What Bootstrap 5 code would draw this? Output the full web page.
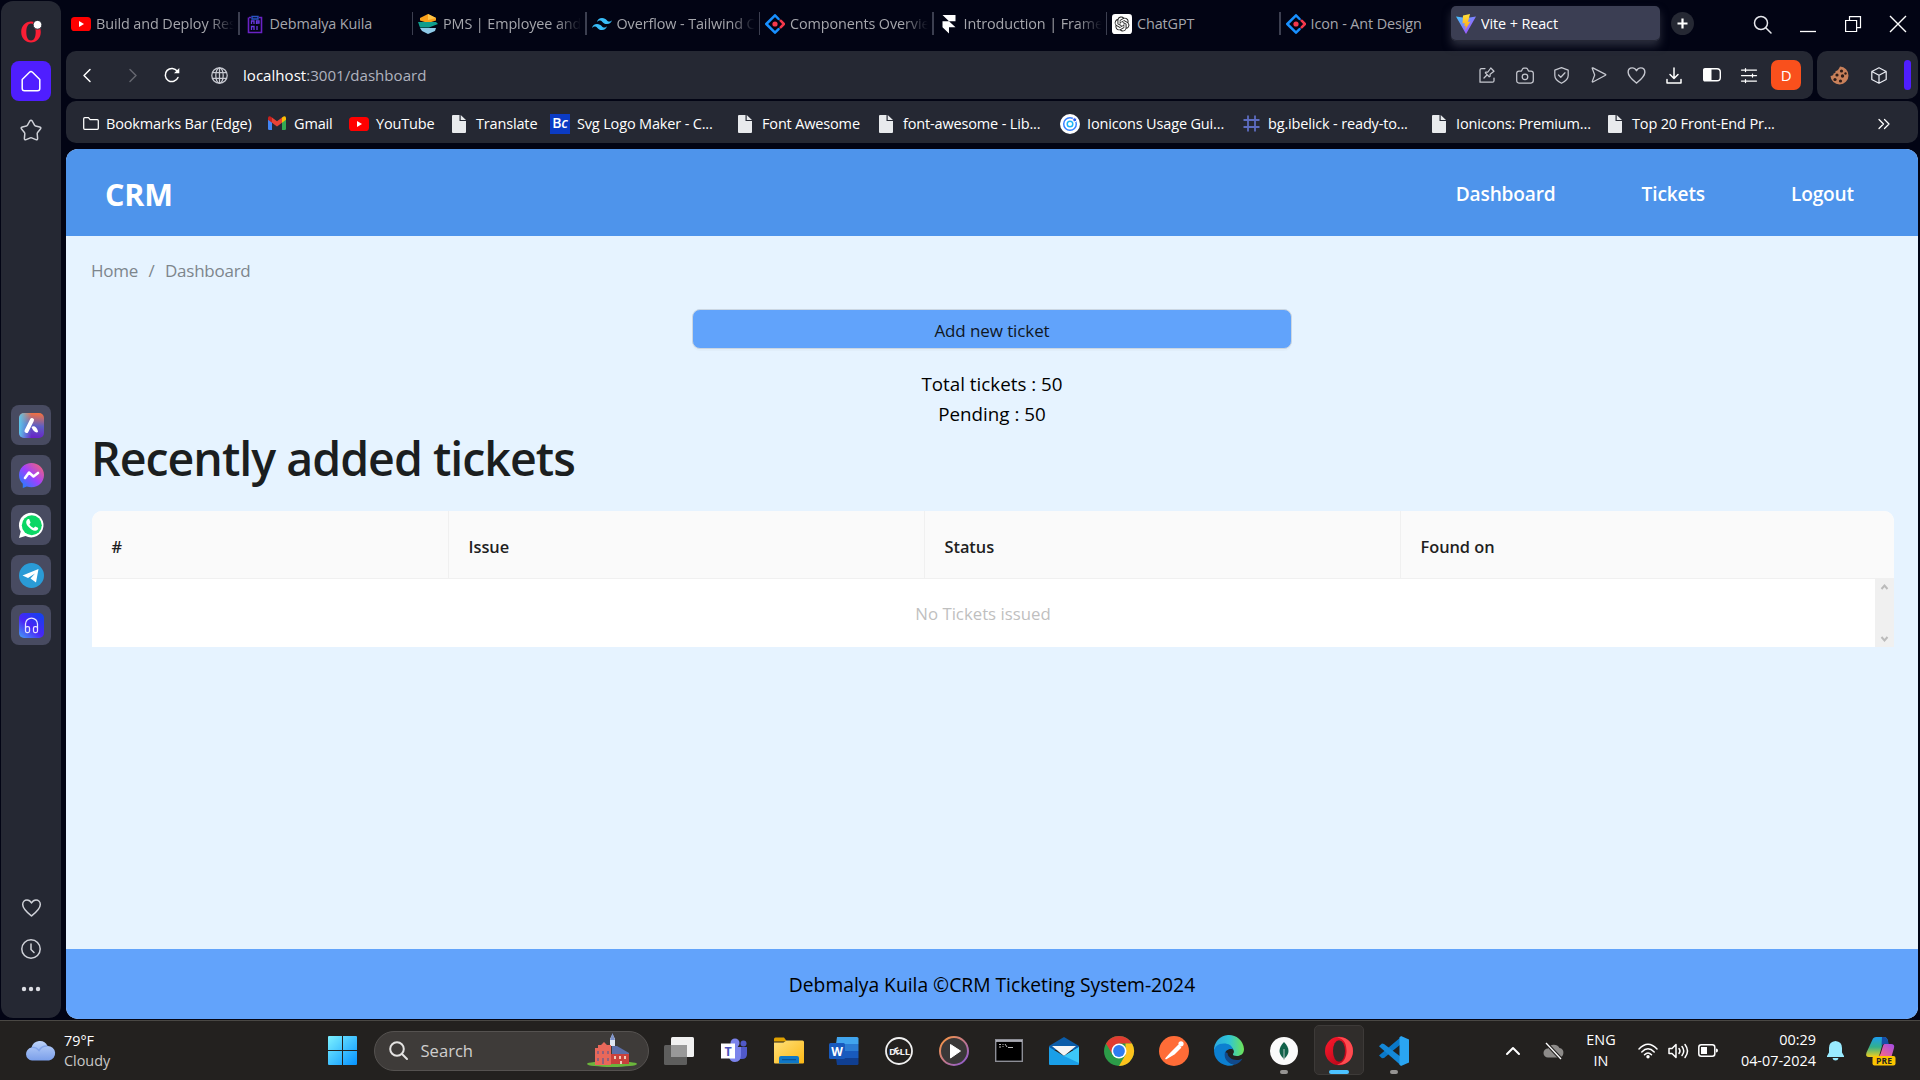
<!DOCTYPE html>
<html lang="en" data-bs-theme="light">
<head>
<meta charset="utf-8">
<title>Vite + React</title>
<link href="https://cdn.jsdelivr.net/npm/bootstrap@5.3.0/dist/css/bootstrap.min.css" rel="stylesheet">
<style>
  :root { --panel:#252833; --chrome:#020414; --ink:#e9ebf2; }
  body { width:1920px; height:1080px; overflow:hidden; background:var(--chrome); font-family:"Open Sans","Noto Sans",sans-serif; font-size:14px; line-height:1.2; }
  svg { display:block; flex:none; overflow:visible; }
  .ln { fill:none; stroke:currentColor; stroke-width:1.5; stroke-linecap:round; stroke-linejoin:round; }
  .thin { stroke-width:1.25; }
  .fat { stroke-width:2; }
  .desk { height:1020px; }
  .side { width:60px; height:1017px; margin:1px 5px 0 1px; background:var(--panel); border-radius:12px; color:#cfd1d8; }
  .side .slot { width:40px; height:40px; border-radius:8px; }
  .side > * { flex:none; }
  .logo { margin-top:18px; }
  .home { background:#4f1eff; margin-top:18px; color:#fff; }
  .star { margin-top:18px; }
  .side .apps { margin-top:264px; gap:10px; }
  .side .apps .slot { background:#484b61; }
  .clock { margin:21px 0 27px; }
  .dots { margin-bottom:26px; }
  .view { width:1852px; }

  .tabs { height:51px; color:#a5a6ac; font-size:14.4px; }
  .tb { width:173.5px; height:48px; padding-left:5px; position:relative; }
  .tb:not(:nth-child(8)):not(.on)::after { content:""; position:absolute; right:0; top:12px; width:1.5px; height:23px; background:#3c3f50; }
  .tb .lbl { margin-left:5px; width:138px; white-space:nowrap; overflow:hidden; letter-spacing:-.1px; }
  .tb .fade-end { -webkit-mask-image:linear-gradient(90deg,#000 82%,transparent 100%); mask-image:linear-gradient(90deg,#000 82%,transparent 100%); }
  .tb.on { width:209px; height:35px; margin:6px 0 0 -3px; background:#3b3e53; border-radius:5px; color:#fff; box-shadow:0 5px 8px #2a2d3c, inset 0 -1px #252735; }
  .plus { width:23px; height:23px; margin:12px 0 0 11px; background:#252833; border-radius:50%; color:#fff; }
  .wins { margin-right:-2px; }
  .wc { width:45px; height:48px; color:#e6e7ec; }

  .addr { height:48px; gap:4px; color:#c6c8d0; }
  .addr .bar { width:1747px; background:var(--panel); border-radius:10px; padding-right:8px; }
  .addr .ext { width:101px; background:var(--panel); border-radius:10px; }
  .cell { width:37.4px; }
  .c-back { width:42px; color:#fff; } .c-fwd { width:50px; color:#64666f; } .c-load { width:28px; color:#fff; } .c-globe { width:48px; margin-left:9px; }
  .url { font-size:15.1px; color:#b0b3bf; }
  .url b { font-weight:400; color:#fff; }
  .userbox { width:30px; height:30px; background:#f9501c; border-radius:7px; color:#fff; font-size:15px; }
  .cookie { margin-left:13px; } .cube { margin-left:22px; color:#e9ebf2; }
  .strip { width:7px; height:30px; background:#4f1eff; margin-left:17px; }

  .marks { height:42px; margin-top:2px; background:var(--panel); border-radius:10px; padding:3px 0 0 15px; color:#fff; font-size:14.5px; letter-spacing:-.16px; white-space:nowrap; }
  .marks .bm { gap:7px; }
  .marks .bm:first-child { gap:5px; }
  .marks .ib { width:20px; }
  .bm:nth-child(1){width:186px} .bm:nth-child(2){width:82px} .bm:nth-child(3){width:100px} .bm:nth-child(4){width:101px}
  .bm:nth-child(5){width:185px} .bm:nth-child(6){width:141px} .bm:nth-child(7){width:184px} .bm:nth-child(8){width:181px}
  .bm:nth-child(9){width:188px} .bm:nth-child(10){width:176px}
  .marks .bc { background:#0b3bc4; height:20px; font-size:14px; font-weight:600; }
  .more { margin-right:28px; }

  .site { margin-top:6px; height:870px; border-radius:12px; overflow:hidden; background:#e6f3ff; color:#000; }
  .top { height:87px; background:#4e94eb; color:#fff; padding:3px 64px 0 39px; }
  .brand { font-size:30.5px; font-weight:700; letter-spacing:-.2px; }
  .top .menu { gap:86px; }
  .top .lk { color:#fff; font-size:19.1px; font-weight:600; letter-spacing:-.15px; padding:0; }
  .crumbs { font-size:17px; letter-spacing:-.25px; color:#7d858c; padding:25px 0 0 25px; --bs-breadcrumb-divider-color:#7d858c; --bs-breadcrumb-item-padding-x:10.5px; margin:0; }
  .crumbs .breadcrumb-item.active { color:#7d858c; }
  .add { width:600px; height:40px; margin:28px auto 0; background:#61a3fb; border:1px solid #cbd6e2; border-radius:8px; box-shadow:0 2px 0 rgba(0,0,0,.02); font-size:17px; padding:2px 0 0; color:#10171f; letter-spacing:-.1px; }
  .stats { font-size:18.8px; line-height:30px; margin-top:20px; }
  .recent { font-size:46.5px; font-weight:600; letter-spacing:-1px; color:#1b1e20; line-height:58px; margin:0 0 0 25px; }
  .tix { width:1802px; margin:24px 0 0 25.5px; border-radius:10px 10px 0 0; overflow:hidden; background:#fff; }
  .tix .hd { height:68px; background:#fafafa; border-bottom:1px solid #f0f0f0; font-size:16.4px; letter-spacing:-.05px; font-weight:600; color:#1f1f1f; }
  .hd div { padding:3px 0 0 20px; border-right:1px solid #f0f0f0; height:100%; display:flex; align-items:center; }
  .hd div:nth-child(1){width:357px} .hd div:nth-child(2),.hd div:nth-child(3){width:476px} .hd div:nth-child(4){border:0}
  .none { height:68px; padding-top:2px; font-size:16.8px; color:#bfbfbf; }
  .scr { width:19px; background:#f0f0f0; padding:5px 0; }
  .foot { height:70px; background:#62a3fb; font-size:19.25px; margin-top:auto; padding-top:2px; }

  .task { height:60px; background:#23211f; border-top:1px solid #4a4844; color:#fff; font-size:14.4px; }
  .wx { width:328px; padding-left:25px; }
  .wx .tx { margin-left:8px; line-height:20px; }
  .wx .tx span { color:#c9c8c7; }
  .find { width:275px; height:40px; margin-left:16.5px; background:#3e3b39; border:1px solid #555250; border-radius:20px; font-size:16.6px; color:#d0cfce; padding:0 11px 0 14px; }
  .find span { margin-left:13px; }
  .dock { margin-left:3px; }
  .ai { width:55px; height:59px; position:relative; }
  .ai.cur::before { content:""; position:absolute; inset:4px 2.5px 5px; background:#302d2b; border:1px solid #3d3a38; border-radius:5px; }
  .ai svg { position:relative; }
  .ai.run::after { content:""; position:absolute; left:23.5px; top:49px; width:8px; height:4px; border-radius:2px; background:#969492; }
  .ai.cur::after { left:17.5px; width:20px; background:#4cc2ff; }
  .tray { margin-left:auto; line-height:20.5px; }
  .t-cloud { margin-left:23px; } .t-lang { width:40px; margin:0 17px; } .t-sys { gap:10px; } .t-time { width:98px; } .t-bell { margin-left:11px; } .t-pilot { margin:0 24px 0 22px; }
</style>
</head>
<body>
<svg width="0" height="0" class="position-absolute">
  <defs>
    <linearGradient id="gv" x1="0" y1="0" x2="1" y2="1"><stop offset="0" stop-color="#41c8ff"/><stop offset="1" stop-color="#bd34fe"/></linearGradient>
    <linearGradient id="gy" x1="0" y1="0" x2="0" y2="1"><stop offset="0" stop-color="#ffe03a"/><stop offset="1" stop-color="#ffa014"/></linearGradient>
    <linearGradient id="gop" x1="0" y1="0" x2="1" y2="1"><stop offset="0" stop-color="#ff1b2d"/><stop offset="1" stop-color="#a70014"/></linearGradient>
    <linearGradient id="gm" x1="0" y1="1" x2="1" y2="0"><stop offset="0" stop-color="#0a8cff"/><stop offset=".5" stop-color="#a040ff"/><stop offset="1" stop-color="#ff6a62"/></linearGradient>
    <linearGradient id="gw" x1="0" y1="0" x2="1" y2="1"><stop offset="0" stop-color="#7df2ff"/><stop offset="1" stop-color="#0592ff"/></linearGradient>
    <linearGradient id="ga" x1=".6" y1="0" x2=".5" y2="1"><stop offset="0" stop-color="#f27042"/><stop offset=".5" stop-color="#5d5fc4"/><stop offset="1" stop-color="#6a21c7"/></linearGradient>
    <linearGradient id="ga2" x1="0" x2="1"><stop offset="0" stop-color="#5cc6ea"/><stop offset=".5" stop-color="#5cc6ea" stop-opacity="0"/></linearGradient>
    <linearGradient id="gh" x1="0" y1="1" x2=".8" y2="0"><stop offset="0" stop-color="#46a0f5"/><stop offset=".5" stop-color="#4a25f5"/><stop offset="1" stop-color="#1640ee"/></linearGradient>
    <linearGradient id="gc" x1="0" y1="0" x2="0" y2="1"><stop offset="0" stop-color="#bcd3fa"/><stop offset="1" stop-color="#7b9fea"/></linearGradient>
    <linearGradient id="ge" x1="0" x2="1"><stop offset="0" stop-color="#2ba8e0"/><stop offset=".5" stop-color="#2fc5d6"/><stop offset="1" stop-color="#6fe455"/></linearGradient>
    <linearGradient id="gf" x1="0" y1="0" x2="1" y2="1"><stop offset="0" stop-color="#ffe07a"/><stop offset="1" stop-color="#fdb814"/></linearGradient>
    <linearGradient id="gp" x1="0" y1="0" x2="1" y2="1"><stop offset="0" stop-color="#ff9a3c"/><stop offset="1" stop-color="#8757d8"/></linearGradient>
    <linearGradient id="gl" x1="0" y1="0" x2="0" y2="1"><stop offset="0" stop-color="#1c9cf0"/><stop offset=".5" stop-color="#32b08c"/><stop offset="1" stop-color="#f2cf1c"/></linearGradient>
    <linearGradient id="gr" x1="0" y1="1" x2="1" y2="0"><stop offset="0" stop-color="#ff6a80"/><stop offset="1" stop-color="#a14be8"/></linearGradient>
    <symbol id="yt" viewBox="0 0 20 20"><rect y="3" width="20" height="14" rx="3.600" fill="#f00"/><path d="M8 7v6l5-3z" fill="#fff"/></symbol>
    <symbol id="file" viewBox="0 0 14 18"><path d="M0 1a1 1 0 0 1 1-1h6.500v6H14v11a1 1 0 0 1-1 1H1a1 1 0 0 1-1-1zM8.700 0 14 5H8.700z" fill="#e8eaed"/></symbol>
    <symbol id="ant" viewBox="0.800 0.800 18.400 18.400"><path d="M13.300 5.400 10 2 2 10l8 8 3.300-3.300" fill="none" stroke="#1890ff" stroke-width="2.300" stroke-linecap="round" stroke-linejoin="round"/><path d="m15.200 7 3 3-3 3" fill="none" stroke="#f5384b" stroke-width="2.300" stroke-linecap="round" stroke-linejoin="round"/><circle cx="10" cy="10" r="2.400" fill="#f5384b"/></symbol>
    <symbol id="heart" viewBox="0 0 20 20"><path class="ln" d="M10 18C6 14.800 1.200 11 1.200 6.500 1.200 3.800 3.100 2 5.500 2 7.600 2 9 3.200 10 5c1-1.800 2.400-3 4.500-3 2.400 0 4.300 1.800 4.300 4.500C18.800 11 14 14.800 10 18z"/></symbol>
    <symbol id="opera" viewBox="0 0 30 30"><ellipse cx="15" cy="15" rx="14" ry="14.300" fill="url(#gop)"/><path d="M13 1.500c8 1 9.500 8 9.500 13.500S20 27.500 13 28.500C22 30 29 24 29 15S22 0 13 1.500z" fill="#ff4b50"/><ellipse cx="15" cy="15" rx="6" ry="10.800" fill="#302d2b"/></symbol>
  </defs>
</svg>

<div class="desk d-flex">
  <!-- browser sidebar -->
  <aside class="side d-flex flex-column align-items-center">
    <svg class="logo" width="22" height="24" viewBox="0 0 22 24"><path fill-rule="evenodd" fill="#fa1e35" d="M11 2.500c5.500 0 9.800 4.400 9.800 10.500S16.500 23.500 11 23.500 1.200 19.100 1.200 13 5.500 2.500 11 2.500zM11 4.500C8 4.500 6.300 8 6.300 13S8 21.500 11 21.500s4.700-3.500 4.700-8.500S14 4.500 11 4.500z"/><circle cx="17.500" cy="5.800" r="4.400" fill="#fff" stroke="#252833"/></svg>
    <div class="slot home d-flex align-items-center justify-content-center">
      <svg width="20" height="22" viewBox="0 0 20 22"><path class="ln" d="M1.200 9.500 8.500 2.200q1.500-1.400 3 0l7.300 7.300v9q0 2.300-2.300 2.300h-13q-2.300 0-2.300-2.300z"/></svg>
    </div>
    <svg class="star" width="22" height="22" viewBox="0 0 22 22"><path class="ln" d="M9.800 2.700q1.200-2 2.400 0L14.600 7l4.900 1.100q2 .5.600 2.100l-3.200 3.700.5 4.800q.1 2.200-1.900 1.400H6.500q-2 .8-1.900-1.400l.5-4.800-3.200-3.700Q.500 8.600 2.500 8.100L7.400 7z" visibility="hidden"/><path class="ln" d="M9.800 2q1.200-1.700 2.400 0l2.300 4.200q.4.700 1.100.9l4.100.9q1.900.6.700 2.100l-2.800 3.300q-.5.600-.4 1.300l.4 4.700q0 1.800-1.700 1.200l-4.200-1.700q-.7-.3-1.400 0l-4.200 1.700q-1.700.6-1.700-1.200l.4-4.700q.1-.7-.4-1.300L1.600 10.100Q.4 8.600 2.300 8l4.100-.9q.7-.2 1.100-.9z"/></svg>
    <div class="apps d-flex flex-column">
      <div class="slot d-flex align-items-center justify-content-center"><svg width="25" height="25"><rect width="25" height="25" rx="5" fill="url(#ga)"/><rect width="25" height="25" rx="5" fill="url(#ga2)"/><path d="M7.500 18 13 7" stroke="#fff" stroke-width="4" stroke-linecap="round"/><path d="M12.500 14c3-2 6 1 6.500 5-2 1.500-5-1-6.500-5z" fill="#fff"/></svg></div>
      <div class="slot d-flex align-items-center justify-content-center"><svg width="25" height="25"><path d="M12.500 0C5.500 0 0 5 0 12c0 3.700 1.400 6.600 3.800 8.800V25l4-1.500c1.500.4 3 .7 4.700.7 7 0 12.500-5.200 12.500-12.200S19.500 0 12.500 0z" fill="url(#gm)"/><path d="m6 15 4-5.500 4.500 4 4.500-3.500" fill="none" stroke="#fff" stroke-width="2.600" stroke-linecap="round" stroke-linejoin="round"/></svg></div>
      <div class="slot d-flex align-items-center justify-content-center"><svg width="25" height="25"><path d="m0 25 1.700-6.500A12.300 12.300 0 1 1 6.500 23z" fill="#fff"/><circle cx="12.800" cy="12.200" r="10" fill="#0bd765"/><path d="M8.700 6.200c-2.500 2-1.600 5 1 7.900 3 3.300 6.800 5 8.900 2.600.9-1 .5-1.900.3-2l-2.600-1.300-1.700 1.700c-2-.8-3.300-2-4.200-3.800l1.200-1.600L10.300 6.300c-.5-.4-1-.3-1.600-.1z" fill="#fff"/></svg></div>
      <div class="slot d-flex align-items-center justify-content-center"><svg width="25" height="25"><circle cx="12.500" cy="12.500" r="12.500" fill="#2a9bd6"/><path d="M3.500 12.500 19.500 6 17 19.500l-5.500-4 4.500-5-7 4.500z" fill="#fff"/></svg></div>
      <div class="slot d-flex align-items-center justify-content-center"><svg width="25" height="25" color="#e8e6ff"><rect width="25" height="25" rx="5" fill="url(#gh)"/><g class="ln thin"><path d="M6.500 15v-4a6 6 0 0 1 12 0v4"/><rect x="6.500" y="13.500" width="4" height="6" rx="1.500"/><rect x="14.500" y="13.500" width="4" height="6" rx="1.500"/></g></svg></div>
    </div>
    <div class="d-flex flex-column align-items-center mt-auto">
      <svg width="21" height="20"><use href="#heart"/></svg>
      <svg class="clock" width="20" height="20" viewBox="0 0 20 20"><circle class="ln" cx="10" cy="10" r="9.200"/><path class="ln" d="M10 5v5.500l3 3"/></svg>
      <svg class="dots" width="20" height="6" fill="#dcdde3"><circle cx="3" cy="3" r="2.200"/><circle cx="10" cy="3" r="2.200"/><circle cx="17" cy="3" r="2.200"/></svg>
    </div>
  </aside>

  <div class="view d-flex flex-column">
    <!-- tab strip -->
    <div class="tabs d-flex">
      <div class="tb d-flex align-items-center"><svg width="20" height="20"><use href="#yt"/></svg><span class="lbl fade-end">Build and Deploy Res</span></div>
      <div class="tb d-flex align-items-center"><svg width="20" height="20" viewBox="0 0 20 20"><path d="M4 3.500h2M14 3.500h2.500v15h-13v-15" fill="none" stroke="#6a22c4" stroke-width="1.600"/><path d="M7 2.500h6V5H7z" fill="none" stroke="#2b55c4" stroke-width="1.400"/><path d="M6.500 10V7H9v3M11.500 10V7H14v2h-2.500M6.500 16v-3.500H9V16M12 12v4" fill="none" stroke="#6a38e0" stroke-width="1.300"/></svg><span class="lbl">Debmalya Kuila</span></div>
      <div class="tb d-flex align-items-center"><svg width="20" height="20" viewBox="0 0 20 20"><path d="M10 0 18 4v2.500L10 9 2 6.500V4z" fill="#f9a01b"/><path d="m10 0 8 4-8 2z" fill="#ffc547"/><path d="M0 8h18l2 2-9 3.500H2z" fill="#0f9d8c"/><path d="M2 14h16l-1 3-7 3-6-3z" fill="#8ecae8"/></svg><span class="lbl fade-end">PMS | Employee and</span></div>
      <div class="tb d-flex align-items-center"><svg width="20" height="20" viewBox="0 0 24 24"><path fill="#38bdf8" d="M12 4.800c-3.200 0-5.200 1.600-6 4.800 1.200-1.600 2.600-2.200 4.200-1.800.9.200 1.600.9 2.300 1.700 1.200 1.200 2.600 2.500 5.500 2.500 3.200 0 5.200-1.600 6-4.800-1.200 1.600-2.600 2.200-4.200 1.800-.9-.2-1.600-.9-2.300-1.700C16.300 6.100 15 4.800 12 4.800zM6 12c-3.200 0-5.200 1.600-6 4.800 1.200-1.600 2.600-2.200 4.200-1.800.9.200 1.600.9 2.300 1.700 1.200 1.200 2.600 2.500 5.500 2.500 3.200 0 5.200-1.600 6-4.800-1.200 1.600-2.600 2.200-4.200 1.800-.9-.2-1.600-.9-2.300-1.700C10.300 13.300 9 12 6 12z"/></svg><span class="lbl fade-end">Overflow - Tailwind C</span></div>
      <div class="tb d-flex align-items-center"><svg width="20" height="20"><use href="#ant"/></svg><span class="lbl fade-end">Components Overvie</span></div>
      <div class="tb d-flex align-items-center"><svg width="20" height="20" viewBox="0 0 20 20"><path d="M3.500 1h13v6.200H10zM3.500 7.200H10l6.500 6H10v6.300l-6.500-6.300z" fill="#fff"/></svg><span class="lbl fade-end">Introduction | Frame</span></div>
      <div class="tb d-flex align-items-center"><svg width="20" height="20" viewBox="-4 -4 32 32"><rect x="-4" y="-4" width="32" height="32" rx="5" fill="#fff"/><path fill="#222" d="M22.2819 9.8211a5.9847 5.9847 0 0 0-.5157-4.9108 6.0462 6.0462 0 0 0-6.5098-2.9A6.0651 6.0651 0 0 0 4.9807 4.1818a5.9847 5.9847 0 0 0-3.9977 2.9 6.0462 6.0462 0 0 0 .7427 7.0966 5.98 5.98 0 0 0 .511 4.9107 6.051 6.051 0 0 0 6.5146 2.9001A5.9847 5.9847 0 0 0 13.2599 24a6.0557 6.0557 0 0 0 5.7718-4.2058 5.9894 5.9894 0 0 0 3.9977-2.9001 6.0557 6.0557 0 0 0-.7475-7.0729zm-9.022 12.6081a4.4755 4.4755 0 0 1-2.8764-1.0408l.1419-.0804 4.7783-2.7582a.7948.7948 0 0 0 .3927-.6813v-6.7369l2.02 1.1686a.071.071 0 0 1 .038.052v5.5826a4.504 4.504 0 0 1-4.4945 4.4944zm-9.6607-4.1254a4.4708 4.4708 0 0 1-.5346-3.0137l.142.0852 4.783 2.7582a.7712.7712 0 0 0 .7806 0l5.8428-3.3685v2.3324a.0804.0804 0 0 1-.0332.0615L9.74 19.9502a4.4992 4.4992 0 0 1-6.1408-1.6464zM2.3408 7.8956a4.485 4.485 0 0 1 2.3655-1.9728V11.6a.7664.7664 0 0 0 .3879.6765l5.8144 3.3543-2.0201 1.1685a.0757.0757 0 0 1-.071 0l-4.8303-2.7865A4.504 4.504 0 0 1 2.3408 7.872zm16.5963 3.8558L13.1038 8.364 15.1192 7.2a.0757.0757 0 0 1 .071 0l4.8303 2.7913a4.4944 4.4944 0 0 1-.6765 8.1042v-5.6772a.79.79 0 0 0-.407-.667zm2.0107-3.0231l-.142-.0852-4.7735-2.7818a.7759.7759 0 0 0-.7854 0L9.409 9.2297V6.8974a.0662.0662 0 0 1 .0284-.0615l4.8303-2.7866a4.4992 4.4992 0 0 1 6.6802 4.66zM8.3065 12.863l-2.02-1.1638a.0804.0804 0 0 1-.038-.0567V6.0742a4.4992 4.4992 0 0 1 7.3757-3.4537l-.142.0805L8.704 5.459a.7948.7948 0 0 0-.3927.6813zm1.0976-2.3654l2.602-1.4998 2.6069 1.4998v2.9994l-2.5974 1.4997-2.6067-1.4997Z"/></svg><span class="lbl">ChatGPT</span></div>
      <div class="tb d-flex align-items-center"><svg width="20" height="20"><use href="#ant"/></svg><span class="lbl">Icon - Ant Design</span></div>
      <div class="tb on d-flex align-items-center"><svg width="20" height="20" viewBox="0 0 20 20"><path d="M0 2.500 10 20 20 2.500 10.500 4z" fill="url(#gv)"/><path d="M14 0 7 1.400l-.5 8.200 2.300-.5-.6 3.200 1.700-.5-.9 4.300 5.500-8.600-2.500.5z" fill="url(#gy)"/></svg><span class="lbl">Vite + React</span></div>
      <div class="plus d-flex align-items-center justify-content-center"><svg width="11" height="11"><path d="M5.500.5v10M.5 5.500h10" stroke="#fff" stroke-width="2.200"/></svg></div>
      <div class="wins d-flex ms-auto">
        <div class="wc d-flex align-items-center justify-content-center"><svg width="19" height="19"><circle class="ln" cx="8" cy="8" r="6.500"/><path class="ln" d="m13 13 5 5"/></svg></div>
        <div class="wc d-flex align-items-center justify-content-center"><svg width="16" height="16"><path d="M0 15.500h16" stroke="#fff" stroke-width="1.300"/></svg></div>
        <div class="wc d-flex align-items-center justify-content-center"><svg width="16" height="16" fill="none" stroke="#fff" stroke-width="1.200"><path d="M.6 4.500h11v11H.6z"/><path d="M4.500 4.500V.600h11v11h-4"/></svg></div>
        <div class="wc d-flex align-items-center justify-content-center"><svg width="16" height="16"><path d="m0 0 16 16M16 0 0 16" stroke="#fff" stroke-width="1.400"/></svg></div>
      </div>
    </div>

    <!-- address bar -->
    <div class="addr d-flex">
      <div class="bar d-flex align-items-center">
        <div class="c-back d-flex justify-content-center"><svg width="8" height="13"><path class="ln" d="M7 .5 1 6.500l6 6"/></svg></div>
        <div class="c-fwd d-flex justify-content-center"><svg width="8" height="13"><path class="ln" d="m1 .5 6 6-6 6"/></svg></div>
        <div class="c-load d-flex justify-content-center"><svg width="16" height="16" viewBox="0 0 16 16"><path class="ln" d="M14 10.500A6.600 6.600 0 1 1 13.300 4.200"/><path d="M15.300 1v5.200H10z" fill="#fff"/></svg></div>
        <div class="c-globe d-flex justify-content-center"><svg width="17" height="17" viewBox="0 0 17 17"><g class="ln thin"><circle cx="8.500" cy="8.500" r="7.700"/><ellipse cx="8.500" cy="8.500" rx="3.700" ry="7.700"/><path d="M8.500.8v15.400M1.500 5.700h14M1.500 11.300h14"/></g></svg></div>
        <div class="url"><b>localhost</b>:3001/dashboard</div>
        <div class="d-flex ms-auto align-items-center">
          <div class="cell d-flex justify-content-center"><svg width="16" height="16" viewBox="0 0 16 16"><g class="ln thin"><path d="M6 1.500H2.500Q1 1.500 1 3v12.200h12.500q1.500 0 1.500-1.500V11M5 11l3.200-3.200M6.300 5.900l3.900 3.900.9-.6v-2L15 4.300 11.800 1 8.900 5H7z"/></g></svg></div>
          <div class="cell d-flex justify-content-center"><svg width="18" height="17" viewBox="0 0 18 17"><g class="ln thin"><path d="M3 4h2.500l1-2q.5-1 1.500-1h2q1 0 1.500 1l1 2H15q2.300 0 2.300 2.300v7Q17.300 16 15 16H3Q.7 16 .7 13.300v-7Q.7 4 3 4z"/><circle cx="9" cy="9.800" r="2.800"/></g></svg></div>
          <div class="cell d-flex justify-content-center"><svg width="15" height="17" viewBox="0 0 15 17"><g class="ln thin"><path d="m7.500.7 6.700 2.500v5.300q0 4.500-6.700 7.800Q.8 13 .8 8.500V3.200z"/><path d="m4.500 8 2.300 2.300L11 5.800"/></g></svg></div>
          <div class="cell d-flex justify-content-center"><svg width="16" height="16"><path class="ln thin" d="M1.200 1.200q0-.6.700-.3l12.600 6.500q.7.400 0 .8L1.900 15q-.7.300-.7-.4L3.700 8z"/></svg></div>
          <div class="cell d-flex justify-content-center"><svg width="19" height="19"><use href="#heart"/></svg></div>
          <div class="cell d-flex justify-content-center"><svg width="16" height="17" color="#fff"><path class="ln" d="M8 1v10M4 7.500 8 11.500l4-4M1 12.500V16h14v-3.500"/></svg></div>
          <div class="cell d-flex justify-content-center"><svg width="18" height="14"><path d="M2 .7h12q3.300 0 3.300 3.300v5.500q0 3.300-3.300 3.300H2q-1.300 0-1.300-1.300V2Q.7.7 2 .7z" fill="none" stroke="#fff" stroke-width="1.400"/><path d="M1 1h7.500v11.500H1z" fill="#fff"/></svg></div>
          <div class="cell d-flex justify-content-center"><svg width="16" height="15" color="#fff"><path class="ln thin" d="M.5 2h15M.5 7.500h15M.5 13h15M4.500.5v3M11.500 6v3M4.500 11.500v3"/></svg></div>
          <div class="cell d-flex justify-content-center"><div class="userbox d-flex align-items-center justify-content-center">D</div></div>
        </div>
      </div>
      <div class="ext d-flex align-items-center">
        <svg class="cookie" width="19" height="19" viewBox="0 0 19 19"><path d="M10 .5a9 9 0 1 1-9.500 9.500c2 0 3.300-1 3-2.500 1.500 0 2.500-1 2-2.500C7.500 5 9 3 10 .5z" fill="#c9805a"/><g fill="#2e1c18"><circle cx="11.500" cy="5" r="1.600"/><circle cx="7" cy="9" r="1.600"/><circle cx="12.500" cy="10" r="1.700"/><circle cx="5" cy="13.500" r="1.600"/><circle cx="10.500" cy="15" r="1.600"/><circle cx="15.500" cy="7.500" r="1.200"/></g></svg>
        <svg class="cube" width="16" height="17" viewBox="0 0 16 17"><path class="ln thin" d="M8 .8 15.200 4.500v8L8 16.200.8 12.500v-8zM.8 4.500 8 8.300l7.200-3.800M8 8.300v7.900"/></svg>
        <span class="strip rounded-pill"></span>
      </div>
    </div>

    <!-- bookmarks -->
    <div class="marks d-flex align-items-center">
      <div class="bm d-flex align-items-center"><span class="ib d-flex justify-content-center"><svg width="16" height="13"><path class="ln thin" d="M.7 1.700q0-1 1-1h3.800l1.600 2h7.200q1 0 1 1v7.600q0 1-1 1H1.700q-1 0-1-1z"/></svg></span>Bookmarks Bar (Edge)</div>
      <div class="bm d-flex align-items-center"><span class="ib d-flex justify-content-center"><svg width="18" height="14" viewBox="0 0 18 14"><path d="M0 2v10.700Q0 14 1.300 14H4V5z" fill="#4285f4"/><path d="M18 2v10.700q0 1.300-1.300 1.300H14V5z" fill="#34a853"/><path d="M4 1.500 9 5.200l5-3.700v5.300L9 10.500 4 6.800z" fill="#ea4335"/><path d="M0 2Q.3-1 4 1.500v5.300L0 3.800z" fill="#c5221f"/><path d="M18 2q-.3-3-4-.5v5.300l4-3z" fill="#fbbc04"/></svg></span>Gmail</div>
      <div class="bm d-flex align-items-center"><span class="ib"><svg width="20" height="20"><use href="#yt"/></svg></span>YouTube</div>
      <div class="bm d-flex align-items-center"><span class="ib d-flex justify-content-center"><svg width="14" height="18"><use href="#file"/></svg></span>Translate</div>
      <div class="bm d-flex align-items-center"><span class="ib bc d-flex align-items-center justify-content-center">B<i>c</i></span>Svg Logo Maker - C...</div>
      <div class="bm d-flex align-items-center"><span class="ib d-flex justify-content-center"><svg width="14" height="18"><use href="#file"/></svg></span>Font Awesome</div>
      <div class="bm d-flex align-items-center"><span class="ib d-flex justify-content-center"><svg width="14" height="18"><use href="#file"/></svg></span>font-awesome - Lib...</div>
      <div class="bm d-flex align-items-center"><span class="ib"><svg width="20" height="20"><circle cx="10" cy="10" r="10" fill="#fff"/><circle cx="10" cy="10" r="6.300" fill="none" stroke="#3880ff" stroke-width="1.500"/><circle cx="10" cy="10" r="2.800" fill="none" stroke="#1fb5f5" stroke-width="1.500"/><circle cx="14.700" cy="5.800" r="2" fill="#2a5bf0" stroke="#fff"/></svg></span>Ionicons Usage Gui...</div>
      <div class="bm d-flex align-items-center"><span class="ib d-flex justify-content-center"><svg width="17" height="17"><path d="M5 .5v16M12 .5v16M.5 5h16M.5 12h16" stroke="#5d6cc0" stroke-width="1.800"/></svg></span>bg.ibelick - ready-to...</div>
      <div class="bm d-flex align-items-center"><span class="ib d-flex justify-content-center"><svg width="14" height="18"><use href="#file"/></svg></span>Ionicons: Premium...</div>
      <div class="bm d-flex align-items-center"><span class="ib d-flex justify-content-center"><svg width="14" height="18"><use href="#file"/></svg></span>Top 20 Front-End Pr...</div>
      <svg class="more ms-auto" width="12" height="10"><path class="ln thin" d="m1 .5 4.500 4.500L1 9.500M6.500.5 11 5 6.500 9.500"/></svg>
    </div>

    <!-- page -->
    <main class="site d-flex flex-column">
      <nav class="top d-flex align-items-center justify-content-between">
        <span class="brand">CRM</span>
        <div class="menu d-flex"><a class="lk nav-link">Dashboard</a><a class="lk nav-link">Tickets</a><a class="lk nav-link">Logout</a></div>
      </nav>
      <ol class="crumbs breadcrumb"><li class="breadcrumb-item">Home</li><li class="breadcrumb-item active">Dashboard</li></ol>
      <button class="add btn">Add new ticket</button>
      <div class="stats text-center">Total tickets : 50<br>Pending : 50</div>
      <h1 class="recent">Recently added tickets</h1>
      <div class="tix">
        <div class="hd d-flex"><div>#</div><div>Issue</div><div>Status</div><div>Found on</div></div>
        <div class="d-flex">
          <div class="none flex-grow-1 d-flex align-items-center justify-content-center">No Tickets issued</div>
          <div class="scr d-flex flex-column align-items-center justify-content-between"><svg width="7" height="6"><path d="m.5 5 3-3.500L6.500 5" fill="none" stroke="#bbb" stroke-width="2"/></svg><svg width="7" height="6"><path d="m.5 1 3 3.500L6.500 1" fill="none" stroke="#bbb" stroke-width="2"/></svg></div>
        </div>
      </div>
      <footer class="foot d-flex align-items-center justify-content-center">Debmalya Kuila ©CRM Ticketing System-2024</footer>
    </main>
  </div>
</div>

<!-- taskbar -->
<div class="task d-flex align-items-center">
  <div class="wx d-flex align-items-center">
    <svg width="31" height="20" viewBox="0 0 31 20"><path d="M7 19.500a6.500 6.500 0 0 1-.500-12.900A8.500 8.500 0 0 1 22.500 5 7.300 7.300 0 0 1 24 19.500z" fill="url(#gc)"/><path d="M6.500 6.600c3-.5 6 1 7.500 3 1.500-3 4.500-4.800 8.500-4.600" fill="none" stroke="#6c93e6" stroke-width="1.300" opacity=".6"/></svg>
    <div class="tx">79°F<br><span>Cloudy</span></div>
  </div>
  <svg width="29" height="29" fill="url(#gw)"><path d="M1 0h13v14H0V1q0-1 1-1zM15 0h13q1 0 1 1v13H15zM0 15h14v14H1q-1 0-1-1zM15 15h14v13q0 1-1 1H15z"/></svg>
  <div class="find d-flex align-items-center">
    <svg width="19" height="19" color="#e4e3e2"><circle class="ln fat" cx="8" cy="8" r="6.800"/><path class="ln fat" d="m13 13 5 5"/></svg>
    <span>Search</span>
    <svg class="ms-auto" width="50" height="33" viewBox="0 0 50 33"><ellipse cx="25" cy="30" rx="25" ry="3" fill="#6bb53c"/><path d="M25 12h5l12 7v3H25z" fill="#5c6ea8"/><path d="M23 12h5V5l-2.500-5L23 5z" fill="#dfe6f2"/><path d="M25.500-1 23 6h5z" fill="#7d92c9"/><path d="M8 14h3v-3h3l3-3 3 3h4v20H8z" fill="#e8685a"/><path d="M24 20h18v10H24z" fill="#c9413c"/><path d="M10 17h2v3h-2zM15 17h2v3h-2zM20 17h2v3h-2zM10 24h2v3h-2zM15 24h2v6h-2zM20 24h2v3h-2z" fill="#93607a"/><path d="M27 22h2v3h-2zM32 22h2v3h-2zM37 22h2v3h-2zM33 27h2v3h-2z" fill="#f0c9b8"/></svg>
  </div>
  <div class="dock d-flex">
    <div class="ai d-flex align-items-center justify-content-center"><svg width="30" height="28"><rect x="7" width="23" height="20" rx="1.500" fill="#f1f1f1"/><rect y="8" width="23" height="20" rx="1.500" fill="#666" opacity=".88"/><path d="M7 8h16v12H7z" fill="#999"/></svg></div>
    <div class="ai d-flex align-items-center justify-content-center"><svg width="28" height="25"><circle cx="15" cy="5" r="4.500" fill="#7b83eb"/><circle cx="23.500" cy="5.500" r="3" fill="#5059c9"/><path d="M18 9h9v7q0 5-5 5h-4z" fill="#5059c9"/><path d="M9 9h12v8q0 7-6 7-5 0-6-5z" fill="#7b83eb"/><path d="M1 5.500h14v15H1z" fill="#fff"/><text x="8" y="17.500" text-anchor="middle" font-size="12.500" font-weight="700" fill="#4b53bc">T</text></svg></div>
    <div class="ai d-flex align-items-center justify-content-center"><svg width="30" height="27"><path d="M0 2q0-1.500 1.500-1.500H10l3 4H0z" fill="#e0a100"/><path d="M0 5.500h9.500l3-2H28.500q1.500 0 1.500 1.500V25.500q0 1-1 1H1q-1 0-1-1z" fill="url(#gf)"/><path d="M5 26.500V21q0-2 2-2h16q2 0 2 2v5.500z" fill="#0f78c8"/><path d="M8 22.700h14" stroke="#0a4d8c"/></svg></div>
    <div class="ai d-flex align-items-center justify-content-center"><svg width="30" height="28"><path d="M8 0h20q1.500 0 1.500 1.500V7H7z" fill="#41a5ee"/><path d="M7 7h22.500v7H7z" fill="#2b7cd3"/><path d="M7 14h22.500v7H7z" fill="#185abd"/><path d="M7 21h22.500v5.500Q29.500 28 28 28H8z" fill="#103f91"/><rect y="6" width="16" height="16" rx="1.500" fill="#185abd"/><text x="8" y="18.500" text-anchor="middle" font-size="12" font-weight="700" fill="#fff">W</text></svg></div>
    <div class="ai d-flex align-items-center justify-content-center"><svg width="28" height="28"><circle cx="14" cy="14" r="13" fill="none" stroke="#f0f0f0" stroke-width="1.800"/><text x="4" y="17.500" font-size="9.500" font-weight="700" fill="#f0f0f0">D</text><text x="9.600" y="17.500" font-size="9.500" font-weight="700" fill="#f0f0f0" transform="rotate(-25 12 14)">E</text><text x="14.500" y="17.500" font-size="9.500" font-weight="700" fill="#f0f0f0">LL</text></svg></div>
    <div class="ai d-flex align-items-center justify-content-center"><svg width="30" height="30"><circle cx="15" cy="15" r="14" fill="#3a3838" stroke="url(#gp)" stroke-width="2"/><path d="M11.500 8.500v13.500L21.500 15z" fill="#fff" stroke="#fff" stroke-linejoin="round"/></svg></div>
    <div class="ai d-flex align-items-center justify-content-center"><svg width="28" height="23"><rect x=".7" y=".7" width="26.600" height="21.600" fill="#000" stroke="#8d8e96" stroke-width="1.400"/><path d="M1 2h26" stroke="#d0d2dc" stroke-width="1.500"/><path d="M4 5.500h2M4 8h2M8 5v1M8 7v1M10 5l2 3M13 8.500h5" stroke="#bbb"/></svg></div>
    <div class="ai d-flex align-items-center justify-content-center"><svg width="30" height="28"><path d="m0 9 15-9 15 9v4H0z" fill="#0b5ca8"/><path d="M3 9h24L15 19z" fill="#f5f5f5"/><path d="M0 10v17q0 1 1 1h28q1 0 1-1V10L15 19z" fill="#1a9fe8"/><path d="M30 10v16L15 19z" fill="#3cc8f8"/></svg></div>
    <div class="ai d-flex align-items-center justify-content-center"><svg width="30" height="30" viewBox="0 0 30 30"><circle cx="15" cy="15" r="15" fill="#2c9c48"/><path d="M2 7.500A15 15 0 0 1 28 7.500H15l-6.500 11z" fill="#e13c31"/><path d="M28 7.500A15 15 0 0 1 15 30l6.500-11.200L21.500 7.500z" fill="#fcc21c"/><circle cx="15" cy="15" r="7.500" fill="#fff"/><circle cx="15" cy="15" r="5.900" fill="#2f7cf0"/></svg></div>
    <div class="ai d-flex align-items-center justify-content-center"><svg width="30" height="30"><circle cx="15" cy="15" r="15" fill="#ff6c37"/><path d="M7 22.500 12 17l7.500-7.500 2 2-6 6z" fill="#fff" stroke="#fff" stroke-width="1.500" stroke-linejoin="round"/><circle cx="22" cy="7.800" r="2.600" fill="#fff"/></svg></div>
    <div class="ai d-flex align-items-center justify-content-center"><svg width="30" height="30" viewBox="0 0 30 30"><path d="M0 15a15 15 0 0 1 30-2c0 5-3.500 7-7 7-3 0-4.500-1-4-2s1.500-2 .5-4c-1-2.500-4-5-8.500-5C5 9 1 12 0 15z" fill="url(#ge)"/><path d="M0 15C.5 11 4 7.500 10 7.500c4.500 0 8 2 9 6-4-1.500-8 1-8 5 0 5 5 9.500 10 10A15 15 0 0 1 0 15z" fill="#0c7fd0"/><path d="M11 16c-2 7 4 13 10.500 12.500 3-1 5.500-3 7-6C22 26 14 23 13.500 17z" fill="#114a8b"/></svg></div>
    <div class="ai run d-flex align-items-center justify-content-center"><svg width="28" height="28"><circle cx="14" cy="14" r="14" fill="#fafafa"/><path d="M14 5c6 6 6 12 0 17-6-5-6-11 0-17z" fill="#116149"/><path d="M14 12v11" stroke="#b8c4c2"/></svg></div>
    <div class="ai run cur d-flex align-items-center justify-content-center"><svg width="30" height="30"><use href="#opera"/></svg></div>
    <div class="ai run d-flex align-items-center justify-content-center"><svg width="30" height="30" viewBox="0 0 30 30"><path d="M22 0v8L5 22l-2 .3L0 19.500 22 1z" fill="#0a78c8"/><path d="M3 7.500 0 10.300 22 29.500V21L5 8z" fill="#1488d8"/><path d="M22 0 30 3.500v23L22 30l-1.500-1.500V1.500z" fill="#2aa5f2"/></svg></div>
  </div>
  <div class="tray d-flex align-items-center">
    <svg width="14" height="8"><path class="ln fat" d="m1 7 6-6 6 6"/></svg>
    <svg class="t-cloud" width="21" height="16" viewBox="0 0 21 16"><path d="M5 14.500a4.500 4.500 0 0 1 0-9A6.500 6.500 0 0 1 16.500 5 4.800 4.800 0 0 1 16 14.500z" fill="#8d8b89"/><path d="m3 0 15 16" stroke="#23211f" stroke-width="3.500"/><path d="m3 0 15 16" stroke="#fff" stroke-width="1.300"/></svg>
    <div class="t-lang text-center">ENG<br>IN</div>
    <div class="t-sys d-flex align-items-center">
      <svg width="20" height="16" viewBox="0 0 20 16"><path class="ln" d="M1 6q9-9.500 18 0M3.800 9q6.200-6.500 12.400 0M6.500 11.800q3.500-3.600 7 0"/><circle cx="10" cy="13.800" r="1.700" fill="#fff"/></svg>
      <svg width="20" height="16" viewBox="0 0 20 16"><path class="ln" d="M1 5.500h3l4-4v13l-4-4H1zM11 5.500q2 2.500 0 5M14 3.500q3.500 4.500 0 9M17 1.500q5 6.500 0 13"/></svg>
      <svg width="20" height="13"><rect class="ln" x=".8" y=".8" width="16" height="11.400" rx="2.500"/><path d="M3 3h6v7H3z" fill="#fff"/><path d="M18 4.500q2 0 2 2t-2 2z" fill="#fff"/></svg>
    </div>
    <div class="t-time text-end">00:29<br>04-07-2024</div>
    <svg class="t-bell" width="17" height="20" fill="#99ebff"><path d="M8.500 0Q15 .5 15 7v4.500l2 3.500v1H0v-1l2-3.500V7Q2 .5 8.500 0zM5.500 17h6q-.5 2.500-3 2.500t-3-2.500z"/></svg>
    <svg class="t-pilot" width="30" height="28"><path d="M7 1.500Q8 0 10 0h8q3 0 4 4l-5 1.500-3.500 12Q13 20 10 20H3Q-1 20 .5 15.500z" fill="url(#gl)"/><path d="M16 0h2q3 0 4 4l.8 3H18q-2 0-2.500 2z" fill="#174ea6"/><path d="M18.500 7H25q4 0 3 4l-2.300 8H12q2 0 2.700-2.500L17 9q.5-2 1.500-2z" fill="url(#gr)"/><rect x="6.500" y="19" width="23" height="9.500" rx="2" fill="#fcc500"/><text x="18" y="26.800" text-anchor="middle" font-size="8.500" font-weight="700" fill="#222" textLength="16">PRE</text></svg>
  </div>
</div>
<script src="https://cdn.jsdelivr.net/npm/bootstrap@5.3.0/dist/js/bootstrap.bundle.min.js"></script>
</body>
</html>
